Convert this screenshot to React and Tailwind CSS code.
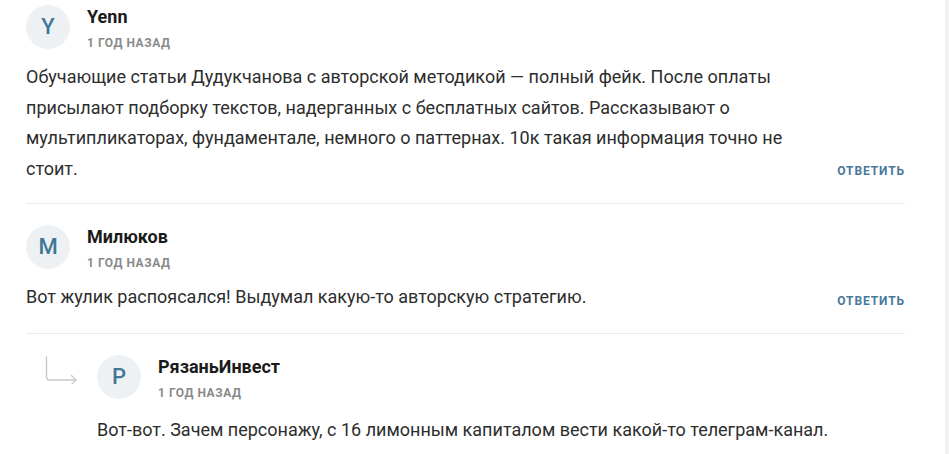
import React from "react";

const font = { fontFamily: "Roboto, 'Liberation Sans', sans-serif" };

function Avatar({ letter }) {
  return (
    <div className="w-[44px] h-[44px] shrink-0 rounded-full bg-[#eef1f3] flex items-center justify-center text-[22px] font-medium text-[#3f7796] leading-none">
      {letter}
    </div>
  );
}

function Header({ letter, name }) {
  return (
    <div className="flex items-start gap-[17px] h-[44px]">
      <Avatar letter={letter} />
      <div className="flex flex-col pt-[2px]">
        <div className="text-[18px] font-bold text-[#1b1b1b] leading-[20px]">{name}</div>
        <div className="mt-[9px] text-[12px] font-bold text-[#8a8a8a] tracking-[0.55px] leading-[14px] uppercase">
          1 год назад
        </div>
      </div>
    </div>
  );
}

function Reply({ low }) {
  return (
    <button
      className={
        low
          ? "shrink-0 text-[12px] font-bold tracking-[0.9px] text-[#48799a] leading-[14px] mb-[5px]"
          : "shrink-0 text-[12px] font-bold tracking-[0.9px] text-[#48799a] leading-[14px] mb-[7px]"
      }
    >
      ОТВЕТИТЬ
    </button>
  );
}

export default function App() {
  return (
    <div className="w-[949px] h-[454px] bg-white flex overflow-hidden" style={font}>
      <div className="flex-1 pl-[26px] pr-[40px]">
        {/* comment 1 */}
        <div className="pt-[5px] pb-[18px] border-b border-[#ebebeb]">
          <Header letter="Y" name="Yenn" />
          <div className="mt-[13px] flex items-end justify-between">
            <p className="w-[770px] text-[18px] leading-[30.7px] text-[#2d2d2d]">
              Обучающие статьи Дудукчанова с авторской методикой — полный фейк. После оплаты присылают подборку текстов, надерганных с бесплатных сайтов. Рассказывают о мультипликаторах, фундаментале, немного о паттернах. 10к такая информация точно не стоит.
            </p>
            <Reply />
          </div>
        </div>
        {/* comment 2 */}
        <div className="pt-[21px] pb-[20px] border-b border-[#ebebeb]">
          <Header letter="M" name="Милюков" />
          <div className="mt-[13px] flex items-end justify-between">
            <p className="w-[770px] text-[18px] leading-[30.7px] text-[#2d2d2d]">
              Вот жулик распоясался! Выдумал какую-то авторскую стратегию.
            </p>
            <Reply low />
          </div>
        </div>
        {/* reply */}
        <div className="flex pt-[21px]">
          <div className="w-[71px] shrink-0 pl-[19px] pt-[1px]">
            <svg width="34" height="28" viewBox="0 0 34 28" fill="none" stroke="#c6cacd" strokeWidth="1.4" strokeLinecap="round" strokeLinejoin="round">
              <path d="M1.5 1 V21 Q1.5 24 4.5 24 H31" />
              <path d="M26.5 19.5 L31 24 L26.5 28.5" />
            </svg>
          </div>
          <div className="flex flex-col">
            <Header letter="P" name="РязаньИнвест" />
            <p className="mt-[16px] text-[18px] leading-[30.7px] text-[#2d2d2d]">
              Вот-вот. Зачем персонажу, с 16 лимонным капиталом вести какой-то телеграм-канал.
            </p>
          </div>
        </div>
      </div>
      <div className="w-[4px] bg-[#f2f2f2]" />
    </div>
  );
}
